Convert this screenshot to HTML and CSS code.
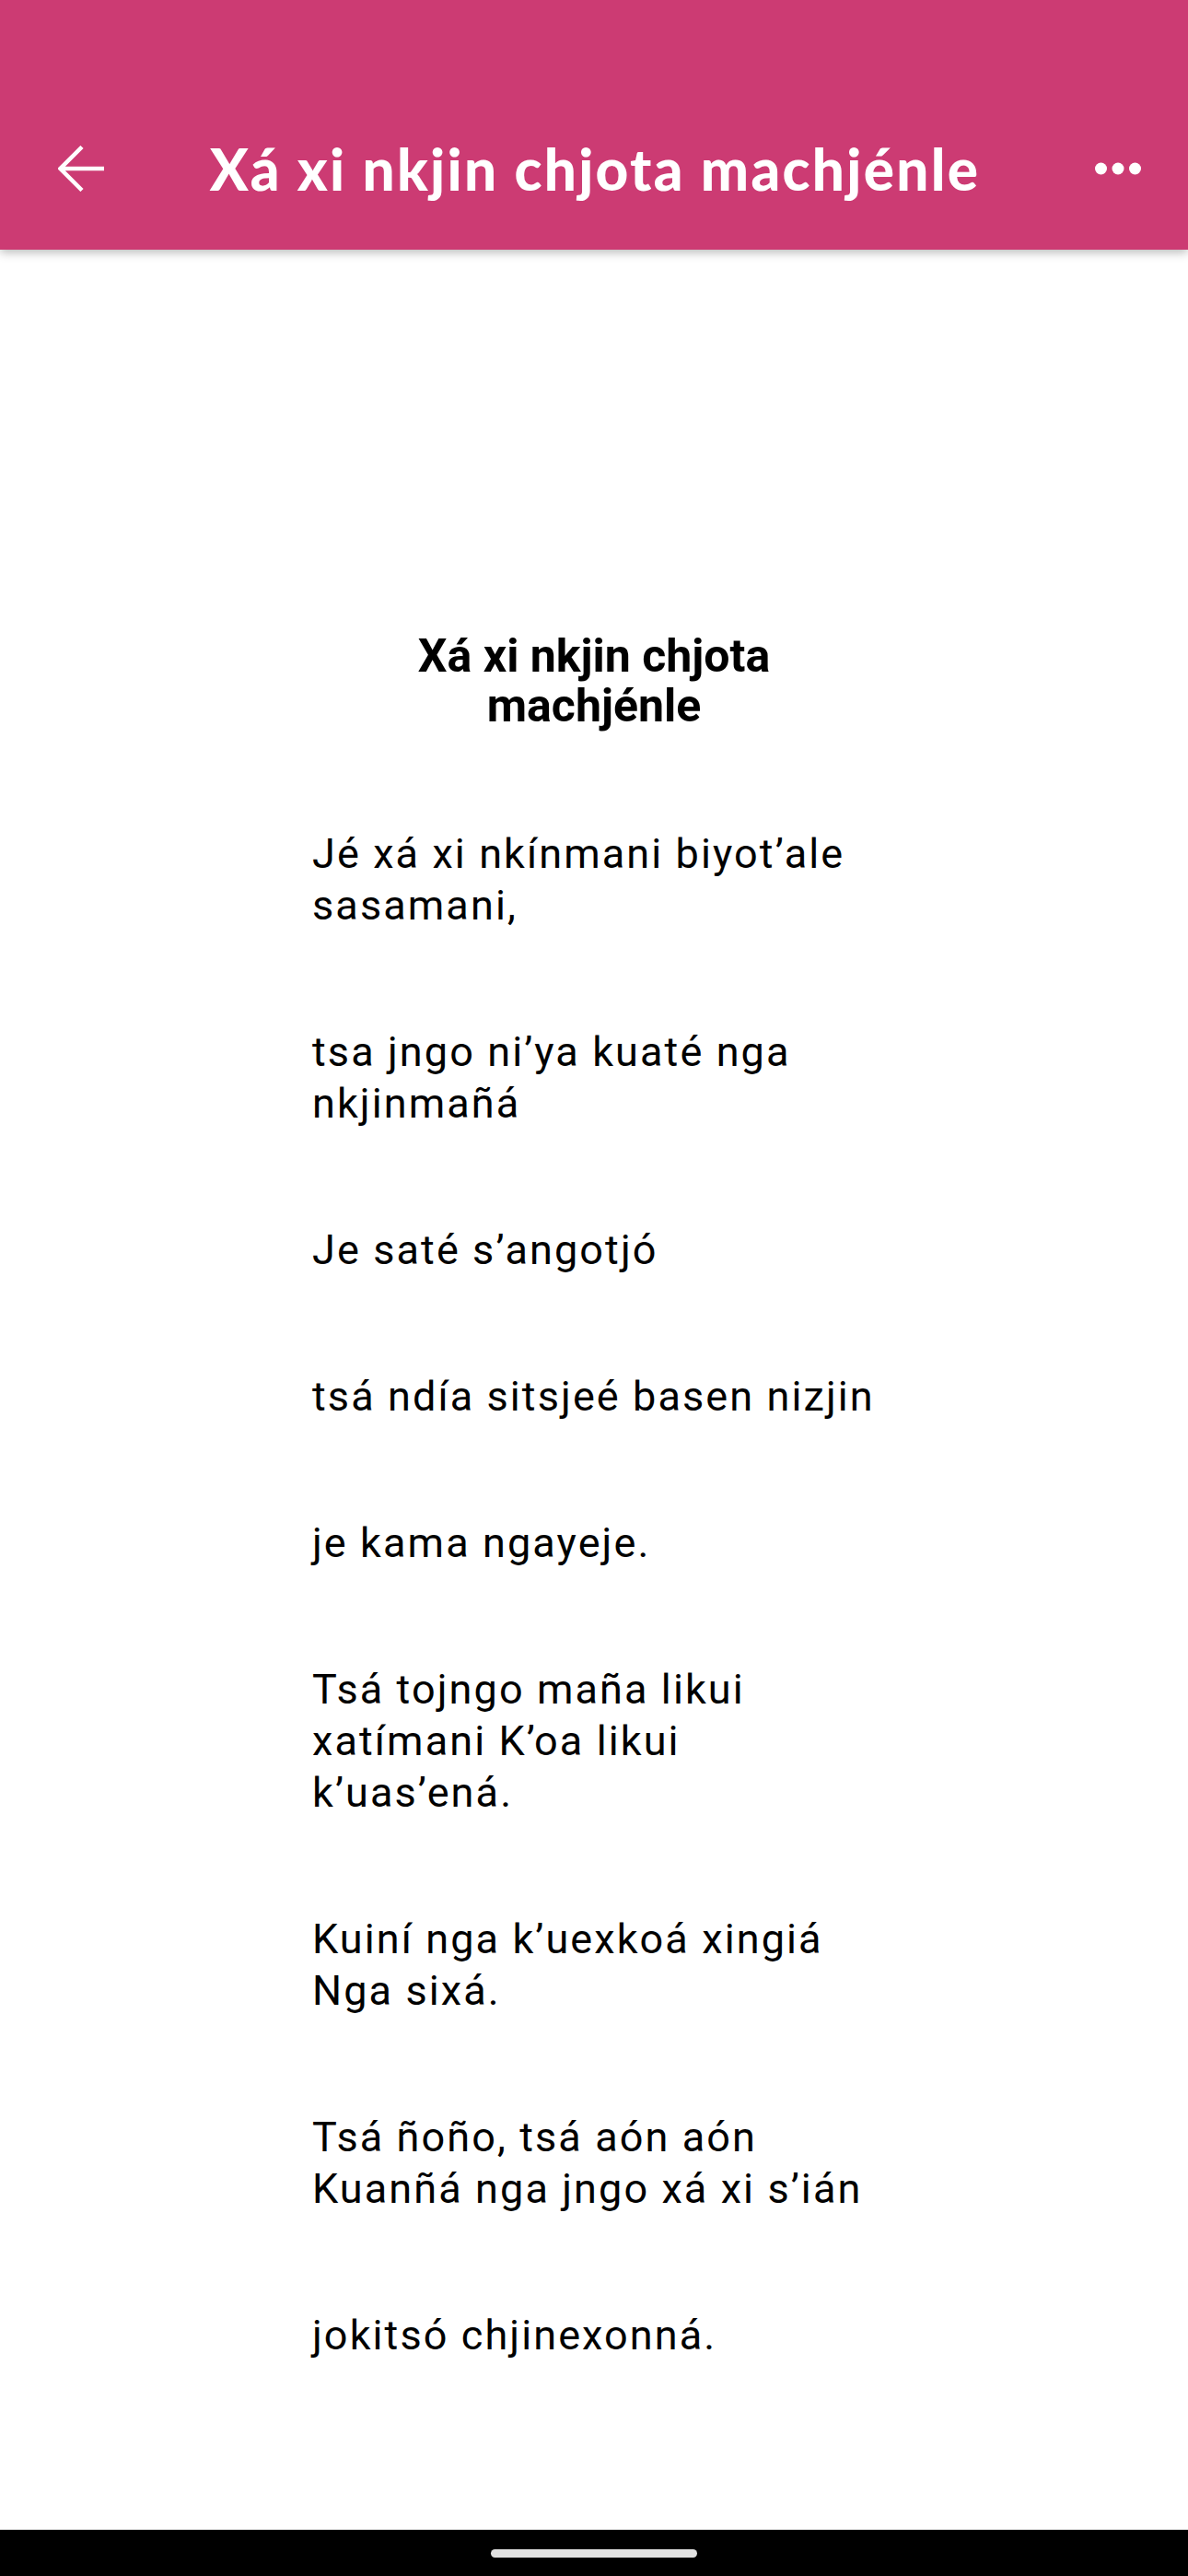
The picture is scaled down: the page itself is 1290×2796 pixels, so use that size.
FILE: index.html
```html
<!DOCTYPE html>
<html lang="es">
<head>
<meta charset="utf-8">
<title>Xá xi nkjin chjota machjénle</title>
<link rel="stylesheet" href="styles.css">
</head>
<body>
<div class="screen">
  <header class="appbar">
    <div class="toolbar">
      <div class="tb-left">
        <svg class="back" viewBox="0 0 50 50" width="50" height="50" aria-hidden="true">
          <path d="M2 25 H50 M26 1.5 L2.5 25 L26 48.5" fill="none" stroke="#fff" stroke-width="4.5" stroke-linejoin="miter"/>
        </svg>
      </div>
      <h1 class="title">Xá xi nkjin chjota machjénle</h1>
      <div class="tb-right">
        <svg class="more" viewBox="0 0 50 14" width="50" height="14" aria-hidden="true">
          <circle cx="6.5" cy="7" r="6.5" fill="#fff"/>
          <circle cx="25" cy="7" r="6.5" fill="#fff"/>
          <circle cx="43.5" cy="7" r="6.5" fill="#fff"/>
        </svg>
      </div>
    </div>
  </header>
  <main class="content">
    <article class="poem">
      <h2 class="poem-title">Xá xi nkjin chjota<br>machjénle</h2>
      <p class="verse">Jé xá xi nkínmani biyot’ale<br>sasamani,</p>
      <p class="verse">tsa jngo ni’ya kuaté nga<br>nkjinmañá</p>
      <p class="verse">Je saté s’angotjó</p>
      <p class="verse">tsá ndía sitsjeé basen nizjin</p>
      <p class="verse">je kama ngayeje.</p>
      <p class="verse">Tsá tojngo maña likui<br>xatímani K’oa likui<br>k’uas’ená.</p>
      <p class="verse">Kuiní nga k’uexkoá xingiá<br>Nga sixá.</p>
      <p class="verse">Tsá ñoño, tsá aón aón<br>Kuanñá nga jngo xá xi s’ián</p>
      <p class="verse">jokitsó chjinexonná.</p>
    </article>
  </main>
  <footer class="navbar">
    <div class="home-pill"></div>
  </footer>
</div>
</body>
</html>
```
FILE: styles.css
```css
html, body {
  margin: 0;
  padding: 0;
  background: #ffffff;
}

body {
  font-family: Roboto, "Noto Sans", "Liberation Sans", sans-serif;
  color: #000;
}

.screen {
  width: 1290px;
  height: 2796px;
  display: flex;
  flex-direction: column;
  overflow: hidden;
}

.appbar {
  background: #cc3b73;
  height: 271px;
  padding-top: 95px;
  box-sizing: border-box;
  box-shadow: 0 3px 10px rgba(0, 0, 0, 0.28);
  position: relative;
  z-index: 2;
  flex: none;
}

.toolbar {
  height: 176px;
  display: grid;
  grid-template-columns: 1fr auto 1fr;
  align-items: center;
}

.tb-left {
  justify-self: start;
  padding-left: 63px;
  display: flex;
}

.tb-right {
  justify-self: end;
  padding-right: 51px;
  display: flex;
}

.back, .more {
  display: block;
}

.title {
  margin: 0;
  padding-left: 2px;
  color: #fff;
  font-family: Lato, "Open Sans", sans-serif;
  font-weight: 900;
  font-size: 62px;
  line-height: 70px;
  letter-spacing: 2.3px;
  white-space: nowrap;
}

.content {
  flex: 1;
  padding-top: 414px;
}

.poem {
  width: 612px;
  margin: 0 auto;
}

.poem-title {
  margin: 0 0 106px;
  text-align: center;
  font-weight: 700;
  font-size: 50px;
  line-height: 54px;
}

.verse {
  margin: 0 0 103px;
  font-size: 45px;
  line-height: 56px;
  letter-spacing: 2.1px;
  white-space: nowrap;
}

.navbar {
  flex: none;
  height: 51px;
  background: #000;
  border-top: 1px solid #d8d8d8;
  box-sizing: border-box;
  display: flex;
  justify-content: center;
  align-items: center;
}

.home-pill {
  width: 224px;
  height: 9px;
  border-radius: 5px;
  background: #e2e2e2;
}
```
